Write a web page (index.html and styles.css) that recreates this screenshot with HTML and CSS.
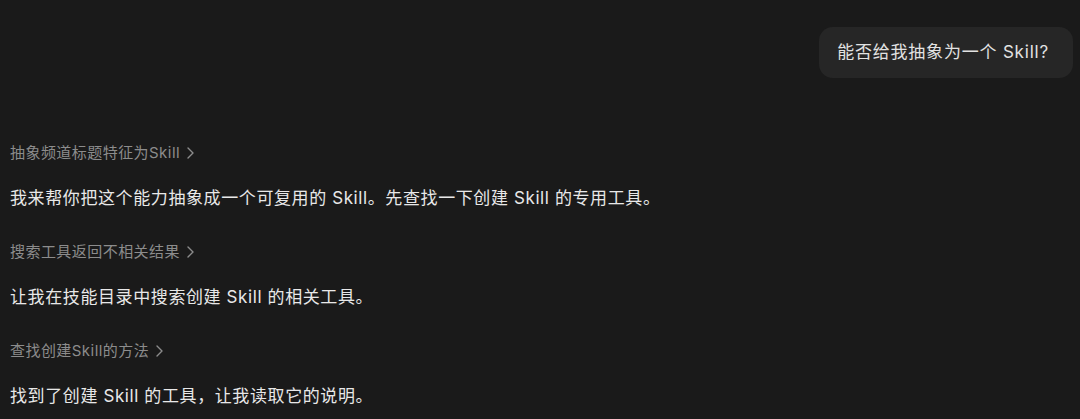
FILE: index.html
```html
<!DOCTYPE html>
<html lang="zh-CN">
<head>
  <meta charset="UTF-8">
  <title>Skill</title>
  <link rel="stylesheet" href="styles.css">
</head>
<body>
  <main class="thread">
    <div class="user-row">
      <div class="bubble">能否给我抽象为一个 Skill?</div>
    </div>

    <div class="step">
      <div class="step-title">抽象频道标题特征为Skill
        <svg class="chev" width="7" height="12" viewBox="0 0 7 12"><polyline points="1,1 6,6 1,11"/></svg>
      </div>
      <p class="reply">我来帮你把这个能力抽象成一个可复用的 Skill。先查找一下创建 Skill 的专用工具。</p>
    </div>

    <div class="step">
      <div class="step-title">搜索工具返回不相关结果
        <svg class="chev" width="7" height="12" viewBox="0 0 7 12"><polyline points="1,1 6,6 1,11"/></svg>
      </div>
      <p class="reply">让我在技能目录中搜索创建 Skill 的相关工具。</p>
    </div>

    <div class="step">
      <div class="step-title">查找创建Skill的方法
        <svg class="chev" width="7" height="12" viewBox="0 0 7 12"><polyline points="1,1 6,6 1,11"/></svg>
      </div>
      <p class="reply">找到了创建 Skill 的工具，让我读取它的说明。</p>
    </div>
  </main>
</body>
</html>
```

FILE: styles.css
```css
* { box-sizing: border-box; }
html, body {
  margin: 0;
  padding: 0;
  background: #1a1a1a;
}
body {
  font-family: Inter, "Noto Sans CJK SC", sans-serif;
  color: #e6e6e6;
}
.thread {
  padding: 27px 7px 0 10px;
}
.user-row {
  display: flex;
  justify-content: flex-end;
  margin-bottom: 63px;
}
.bubble {
  background: #262626;
  color: #e2e2e2;
  font-size: 17px;
  letter-spacing: 0.8px;
  line-height: 51px;
  height: 51px;
  padding: 0 24px 0 18px;
  border-radius: 14px;
}
.step-title {
  display: flex;
  align-items: center;
  gap: 7px;
  font-size: 15px;
  letter-spacing: 0.45px;
  line-height: 24px;
  color: #8c8c8c;
  margin-bottom: 21px;
}
.chev {
  fill: none;
  stroke: #8c8c8c;
  stroke-width: 1.4;
  stroke-linecap: round;
  stroke-linejoin: round;
}
.reply {
  margin: 0 0 30px;
  font-size: 17px;
  letter-spacing: 0.6px;
  line-height: 24px;
  color: #e8e8e8;
}
```
